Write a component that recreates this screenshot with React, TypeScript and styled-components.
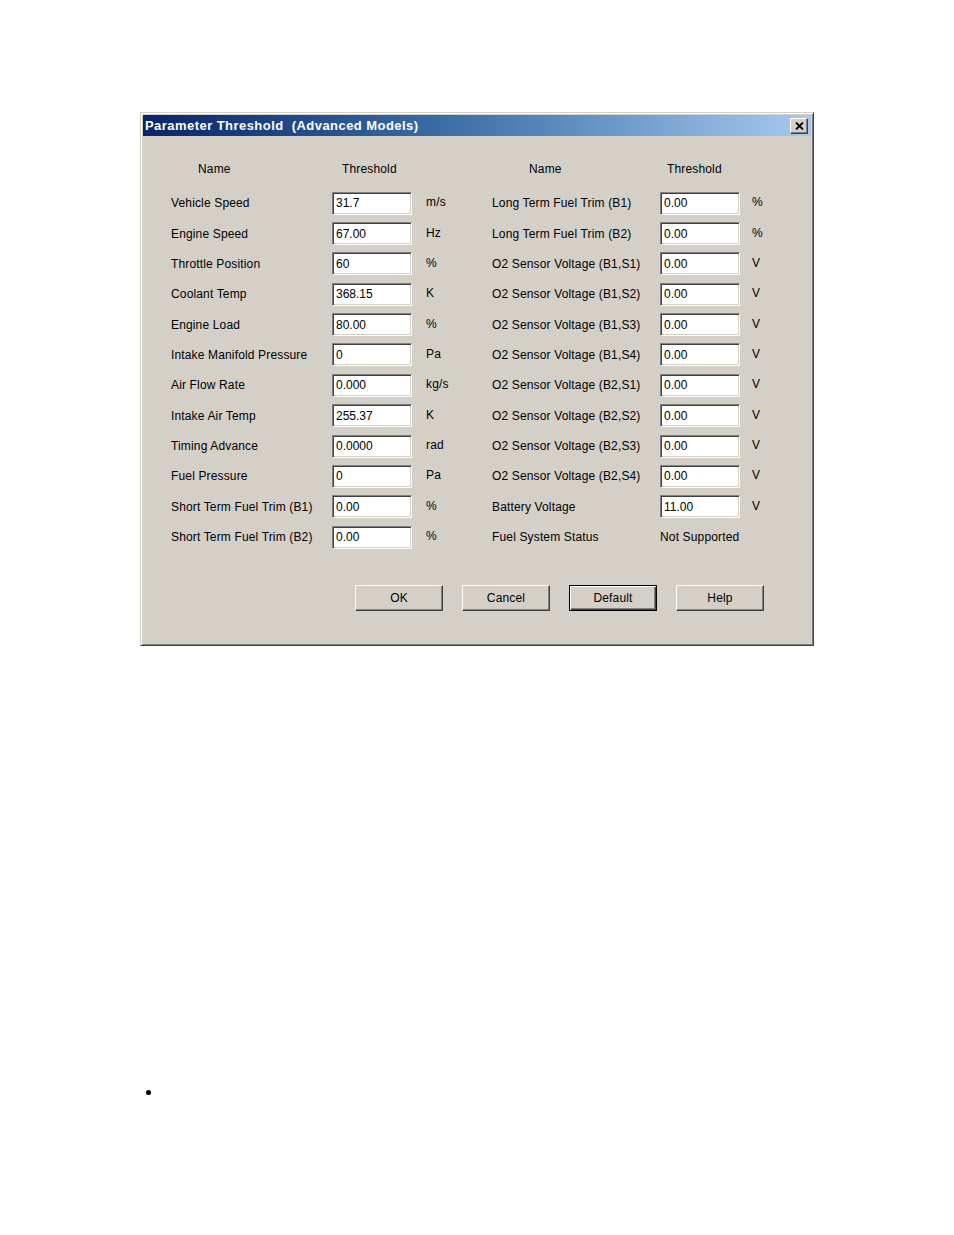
import { createGlobalStyle, styled } from 'styled-components';

const GlobalStyle = createGlobalStyle`
  html, body {
    margin: 0;
    padding: 0;
    background: #ffffff;
  }
  body {
    font-family: 'Liberation Sans', Arial, sans-serif;
  }
`;

const Page = styled.div`
  width: 954px;
  min-height: 1235px;
  padding: 112px 0 0 140px;
  box-sizing: border-box;
`;

const Dialog = styled.div`
  width: 674px;
  box-sizing: border-box;
  background: #d4d0c8;
  border: 1px solid;
  border-color: #d4d0c8 #404040 #404040 #d4d0c8;
  box-shadow: inset 1px 1px 0 #ffffff, inset -1px -1px 0 #808080;
  padding: 2px 2px 34px;
`;

const TitleBar = styled.div`
  height: 21px;
  display: flex;
  align-items: center;
  justify-content: space-between;
  padding: 0 3px 0 2px;
  background: linear-gradient(to right, #0a246a 0%, #3a6ea5 45%, #a6caf0 100%);
`;

const Title = styled.span`
  color: #ffffff;
  font-weight: bold;
  font-size: 13px;
  letter-spacing: 0.45px;
  white-space: pre;
`;

const CloseButton = styled.div`
  width: 18px;
  height: 16px;
  box-sizing: border-box;
  display: flex;
  align-items: center;
  justify-content: center;
  background: #d4d0c8;
  border: 1px solid;
  border-color: #ffffff #404040 #404040 #ffffff;
  box-shadow: inset -1px -1px 0 #808080;
`;

const Body = styled.div`
  padding: 23px 0 0 28px;
  font-size: 12px;
  letter-spacing: 0.15px;
  color: #000000;
`;

const FormGrid = styled.div`
  display: grid;
  grid-template-columns: 161px 80px 80px 168px 80px 1fr;
  grid-template-rows: 29px repeat(12, 30.36px);
`;

const HeadCell = styled.div<{ $offset: number }>`
  padding-left: ${({ $offset }) => $offset}px;
  line-height: 20px;
  white-space: nowrap;
`;

const Cell = styled.div<{ $offset?: number }>`
  display: flex;
  align-items: center;
  padding-left: ${({ $offset = 0 }) => $offset}px;
  white-space: nowrap;
`;

const UnitCell = styled(Cell)`
  padding-bottom: 2px;
`;

const Field = styled.div`
  width: 80px;
  height: 23px;
  box-sizing: border-box;
  background: #ffffff;
  border: 1px solid;
  border-color: #808080 #ffffff #ffffff #808080;
  box-shadow: inset 1px 1px 0 #404040, inset -1px -1px 0 #d4d0c8;
  padding: 0 3px;
  display: flex;
  align-items: center;
  font-size: 12px;
  letter-spacing: 0;
`;

const ButtonRow = styled.div`
  display: flex;
  gap: 19px;
  padding-left: 184px;
  margin-top: 33px;
`;

const Button = styled.div<{ $isDefault?: boolean }>`
  width: 88px;
  height: 26px;
  box-sizing: border-box;
  display: flex;
  align-items: center;
  justify-content: center;
  font-size: 12px;
  background: #d4d0c8;
  border: 1px solid;
  border-color: ${({ $isDefault }) => ($isDefault ? '#000000' : '#ffffff #404040 #404040 #ffffff')};
  box-shadow: ${({ $isDefault }) =>
    $isDefault
      ? 'inset 1px 1px 0 #ffffff, inset -1px -1px 0 #404040, inset -2px -2px 0 #808080'
      : 'inset -1px -1px 0 #808080'};
`;

const BulletList = styled.ul`
  list-style: none;
  margin: 438px 0 0;
  padding: 0;
`;

const BulletItem = styled.li`
  height: 16px;
  display: flex;
  align-items: center;
  &::before {
    content: '';
    width: 5px;
    height: 5px;
    margin-left: 6px;
    border-radius: 50%;
    background: #000000;
  }
`;

type Row = {
  name: string;
  value: string;
  unit: string;
  name2: string;
  value2?: string;
  unit2?: string;
  text2?: string;
};

const rows: Row[] = [
  { name: 'Vehicle Speed', value: '31.7', unit: 'm/s', name2: 'Long Term Fuel Trim (B1)', value2: '0.00', unit2: '%' },
  { name: 'Engine Speed', value: '67.00', unit: 'Hz', name2: 'Long Term Fuel Trim (B2)', value2: '0.00', unit2: '%' },
  { name: 'Throttle Position', value: '60', unit: '%', name2: 'O2 Sensor Voltage (B1,S1)', value2: '0.00', unit2: 'V' },
  { name: 'Coolant Temp', value: '368.15', unit: 'K', name2: 'O2 Sensor Voltage (B1,S2)', value2: '0.00', unit2: 'V' },
  { name: 'Engine Load', value: '80.00', unit: '%', name2: 'O2 Sensor Voltage (B1,S3)', value2: '0.00', unit2: 'V' },
  { name: 'Intake Manifold Pressure', value: '0', unit: 'Pa', name2: 'O2 Sensor Voltage (B1,S4)', value2: '0.00', unit2: 'V' },
  { name: 'Air Flow Rate', value: '0.000', unit: 'kg/s', name2: 'O2 Sensor Voltage (B2,S1)', value2: '0.00', unit2: 'V' },
  { name: 'Intake Air Temp', value: '255.37', unit: 'K', name2: 'O2 Sensor Voltage (B2,S2)', value2: '0.00', unit2: 'V' },
  { name: 'Timing Advance', value: '0.0000', unit: 'rad', name2: 'O2 Sensor Voltage (B2,S3)', value2: '0.00', unit2: 'V' },
  { name: 'Fuel Pressure', value: '0', unit: 'Pa', name2: 'O2 Sensor Voltage (B2,S4)', value2: '0.00', unit2: 'V' },
  { name: 'Short Term Fuel Trim (B1)', value: '0.00', unit: '%', name2: 'Battery Voltage', value2: '11.00', unit2: 'V' },
  { name: 'Short Term Fuel Trim (B2)', value: '0.00', unit: '%', name2: 'Fuel System Status', text2: 'Not Supported' },
];

const App = () => {
  return (
    <Page>
      <GlobalStyle />
      <Dialog>
        <TitleBar>
          <Title>Parameter Threshold  (Advanced Models)</Title>
          <CloseButton>
            <svg width='9' height='8' viewBox='0 0 9 8'>
              <path d='M1 0.5 L8 7.5 M8 0.5 L1 7.5' stroke='#000' strokeWidth='1.8' />
            </svg>
          </CloseButton>
        </TitleBar>
        <Body>
          <FormGrid>
            <HeadCell $offset={27}>Name</HeadCell>
            <HeadCell $offset={10}>Threshold</HeadCell>
            <HeadCell $offset={0} />
            <HeadCell $offset={37}>Name</HeadCell>
            <HeadCell $offset={7}>Threshold</HeadCell>
            <HeadCell $offset={0} />
            {rows.map((r) => (
              <>
                <Cell key={r.name}>{r.name}</Cell>
                <Cell>
                  <Field>{r.value}</Field>
                </Cell>
                <UnitCell $offset={14}>{r.unit}</UnitCell>
                <Cell>{r.name2}</Cell>
                <Cell>{r.text2 ? r.text2 : <Field>{r.value2}</Field>}</Cell>
                <UnitCell $offset={12}>{r.unit2}</UnitCell>
              </>
            ))}
          </FormGrid>
          <ButtonRow>
            <Button>OK</Button>
            <Button>Cancel</Button>
            <Button $isDefault>Default</Button>
            <Button>Help</Button>
          </ButtonRow>
        </Body>
      </Dialog>
      <BulletList>
        <BulletItem />
      </BulletList>
    </Page>
  );
};

export default App;
